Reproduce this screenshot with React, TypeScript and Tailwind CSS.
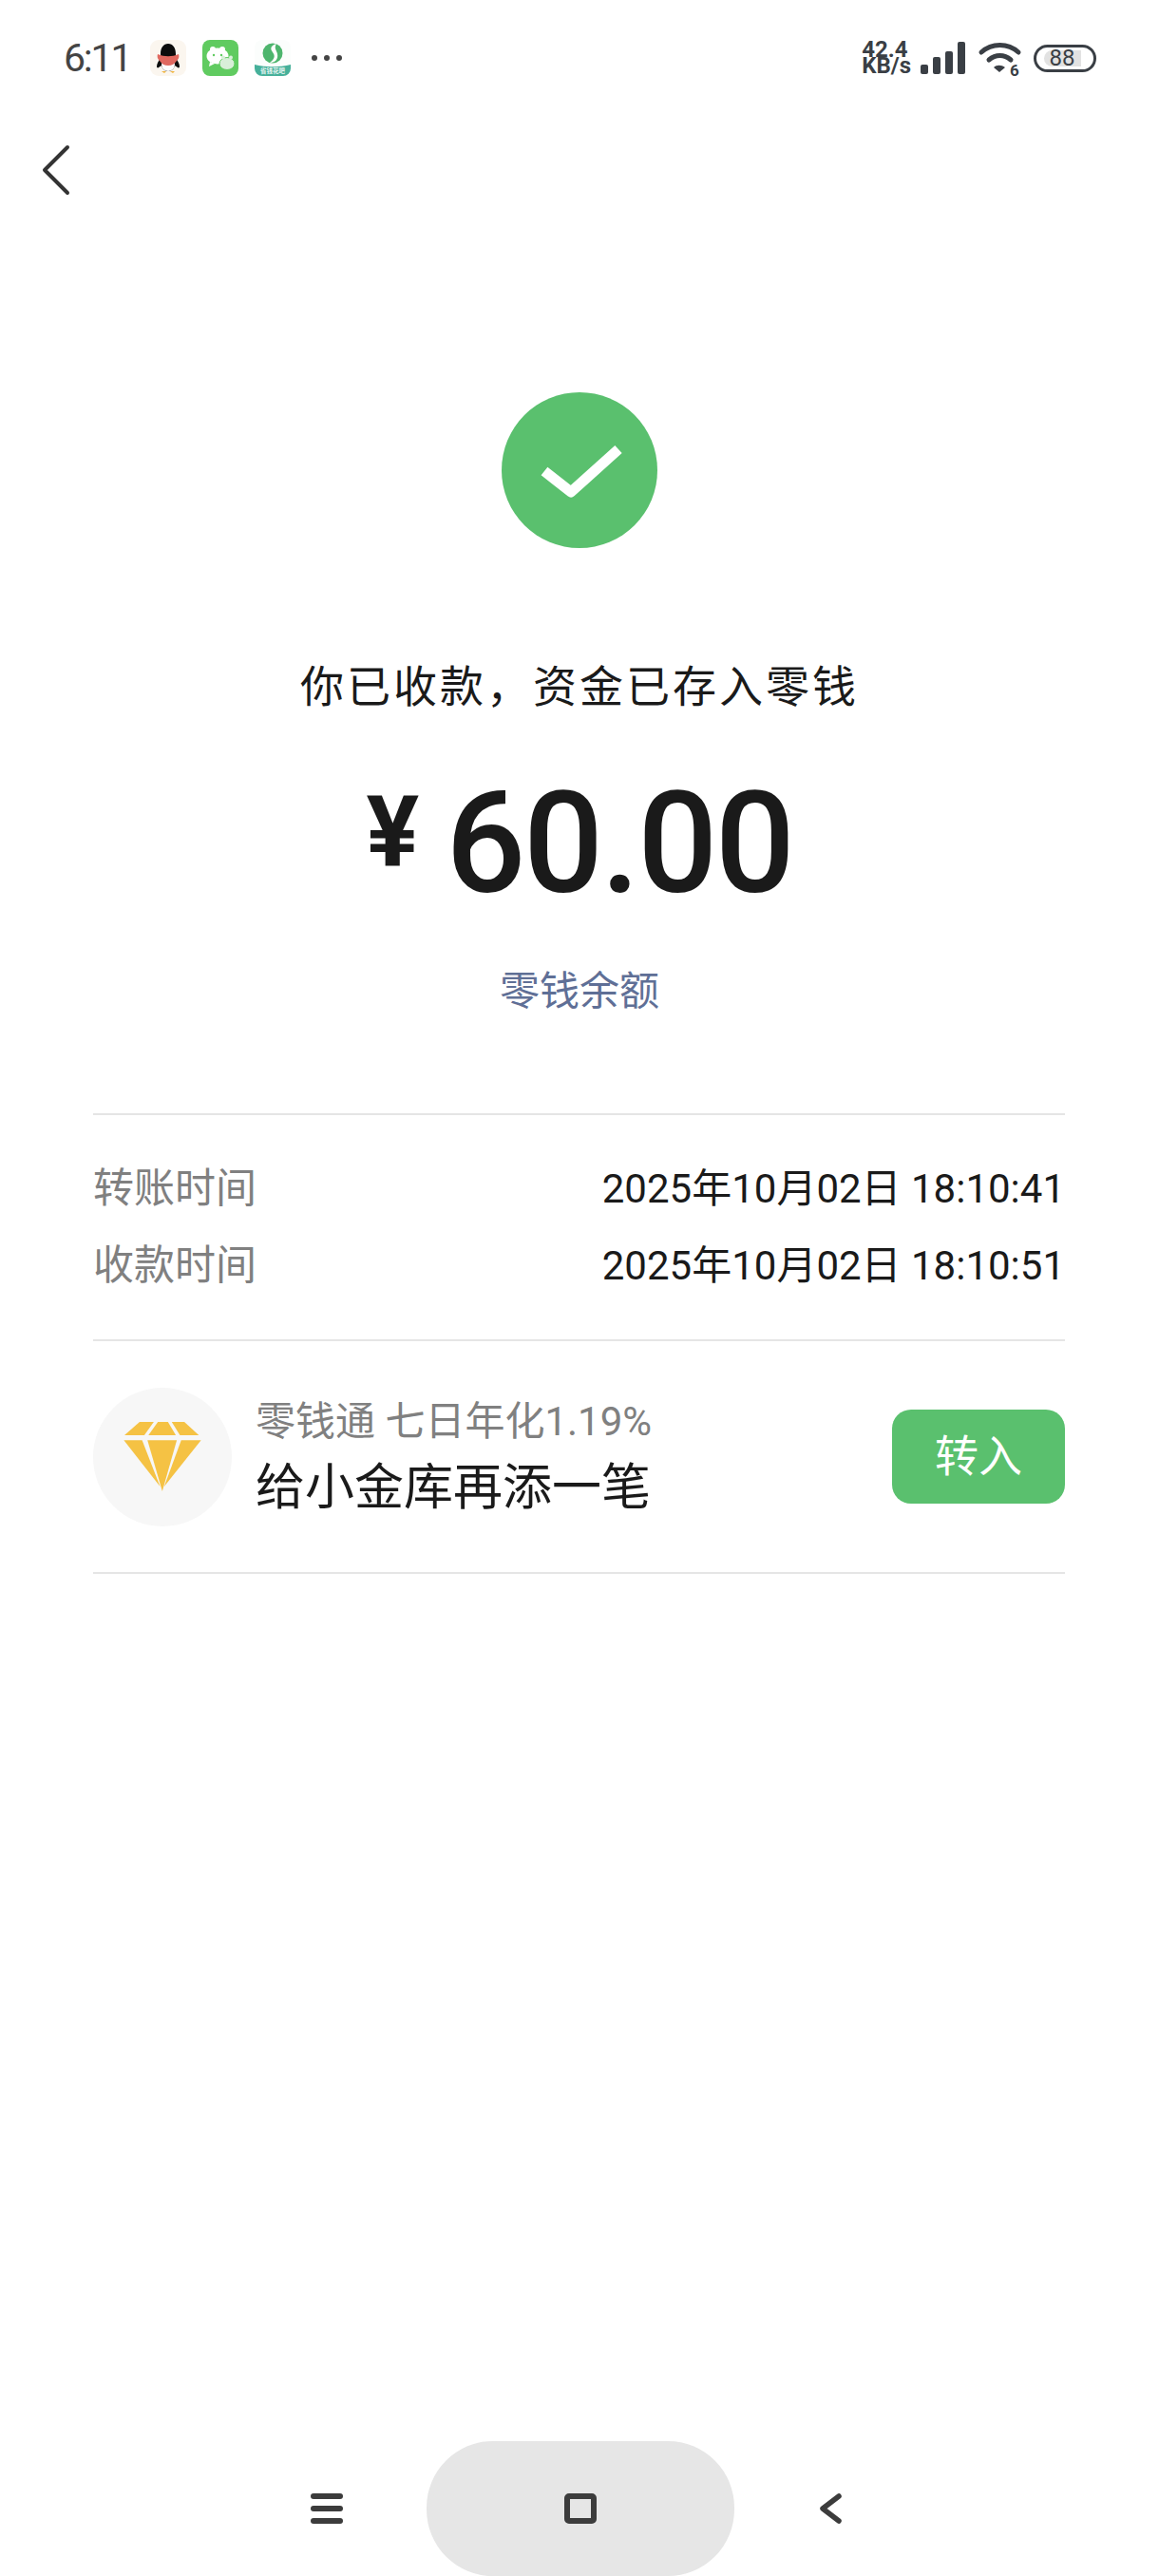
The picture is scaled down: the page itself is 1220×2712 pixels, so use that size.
import React from "react";

const cjk = "font-['Roboto','Noto_Sans_CJK_SC',sans-serif]";

const QQIcon = () => (
  <svg width="38" height="38" viewBox="0 0 38 38">
    <rect width="38" height="38" rx="9" fill="#fbf6ef" />
    <path d="M19 4c-5 0-8 4-8 11v4c-2 3-4 6-4 9 0 1 1 2 2 1l3-2c1 4 4 6 7 6s6-2 7-6l3 2c1 1 2 0 2-1 0-3-2-6-4-9v-4c0-7-3-11-8-11z" fill="#0c0c0c" />
    <ellipse cx="19" cy="26" rx="7" ry="7" fill="#fdfdfd" />
    <path d="M8 15c7 3 15 3 22 0 1 3 0 5-2 7-2 3-5 5-9 5s-7-2-9-5c-2-2-3-4-2-7z" fill="#e0685f" />
    <path d="M12 33h5l-2 2zM21 33h5l-2 2z" fill="#f0b33c" />
  </svg>
);

const WechatIcon = () => (
  <svg width="38" height="38" viewBox="0 0 38 38">
    <rect width="38" height="38" rx="8" fill="#60cb60" />
    <ellipse cx="16" cy="17" rx="11.5" ry="8.5" fill="#fff" />
    <circle cx="11" cy="10" r="3" fill="#fff" />
    <circle cx="21" cy="10" r="3" fill="#fff" />
    <path d="M8 23l-1 5 6-3z" fill="#fff" />
    <ellipse cx="26" cy="25" rx="8" ry="6.5" fill="#d8efd8" stroke="#60cb60" strokeWidth="1" />
    <circle cx="22" cy="18.5" r="2" fill="#d8efd8" />
    <circle cx="30" cy="18.5" r="2" fill="#d8efd8" />
    <circle cx="12" cy="16" r="1.2" fill="#60cb60" />
    <circle cx="20" cy="16" r="1.2" fill="#60cb60" />
  </svg>
);

const GreenAppIcon = () => (
  <svg width="38" height="38" viewBox="0 0 38 38">
    <rect width="38" height="38" rx="8" fill="#fbfdfc" />
    <path d="M0 26c12 3 26 3 38 0v4a8 8 0 0 1-8 8H8a8 8 0 0 1-8-8z" fill="#46b09a" />
    <circle cx="19" cy="14" r="10.5" fill="#4db56d" />
    <path d="M23 4c-6 2-7 5-4 9s2 7-3 11c6 0 9-4 8-9s-4-6-1-11z" fill="#fff" />
    <text x="19" y="35" textAnchor="middle" fontFamily="Noto Sans CJK SC" fontWeight="700" fontSize="6.5" fill="#e6f5f1">省钱花吧</text>
  </svg>
);

const StatusBar = () => (
  <div className="flex h-[122px] items-center justify-between pl-[67px] pr-[66px]">
    <div className="flex items-center">
      <span className="w-[91px] text-[41px] leading-none tracking-[-2.2px] text-[#444444]">6:11</span>
      <div className="flex items-center gap-[17px]">
        <QQIcon />
        <WechatIcon />
        <GreenAppIcon />
      </div>
      <div className="ml-[22px] flex gap-[7px]">
        <span className="h-[6px] w-[6px] rounded-full bg-[#444444]" />
        <span className="h-[6px] w-[6px] rounded-full bg-[#444444]" />
        <span className="h-[6px] w-[6px] rounded-full bg-[#444444]" />
      </div>
    </div>
    <div className="flex items-center">
      <div className="text-[24px] font-bold leading-[17px] text-[#3a3f45]">
        42.4
        <br />
        KB/s
      </div>
      <svg className="ml-[10px]" width="48" height="34" viewBox="0 0 48 34" fill="#3a3f45">
        <rect x="0" y="24" width="8" height="10" rx="2" />
        <rect x="13" y="16" width="8" height="18" rx="2" />
        <rect x="26" y="10" width="8" height="24" rx="2" />
        <rect x="39" y="0" width="8" height="34" rx="2" />
      </svg>
      <svg className="ml-[13px] mt-[3px] overflow-visible" width="46" height="38" viewBox="0 0 46 38">
        <path d="M3 11c11-10 28-10 39 0" fill="none" stroke="#3a3f45" strokeWidth="5" strokeLinecap="round" />
        <path d="M11 19c7-6 16-6 23 0" fill="none" stroke="#3a3f45" strokeWidth="5" strokeLinecap="round" />
        <path d="M16 27c3-3 8-3 12 0l-6 5z" fill="#3a3f45" />
        <text x="33" y="36" fontFamily="Roboto" fontWeight="700" fontSize="17" fill="#3a3f45">6</text>
      </svg>
      <div className="relative ml-[12px] flex h-[29px] w-[66px] items-center justify-center rounded-full border-[3px] border-[#3a3f45] text-[24px] leading-none text-[#3a3f45]">
        <span className="absolute left-[8px] top-[3px] h-[17px] w-[39px] rounded-l-full bg-[#e2e2e2]" />
        <span className="relative -ml-[6px]">88</span>
      </div>
    </div>
  </div>
);

const NavBar = () => (
  <div className="mt-auto flex items-center pl-[327px]">
    <svg width="34" height="32" viewBox="0 0 34 32" fill="#3c3c3c">
      <rect y="0" width="34" height="6" rx="3" />
      <rect y="13" width="34" height="6" rx="3" />
      <rect y="26" width="34" height="6" rx="3" />
    </svg>
    <div className="ml-[88px] mr-[89px] flex h-[142px] w-[324px] items-center justify-center rounded-[70px] bg-[#e6e6e6]">
      <div className="h-[32px] w-[34px] rounded-[5px] border-[6px] border-[#3c3c3c]" />
    </div>
    <svg width="24" height="32" viewBox="0 0 24 32" fill="none" stroke="#3c3c3c" strokeWidth="5.5" strokeLinecap="round" strokeLinejoin="round">
      <path d="M21 3L4 16l17 13" />
    </svg>
  </div>
);

const DetailRow = ({ label, value }: { label: string; value: string }) => (
  <div className="flex h-[81px] items-center justify-between">
    <span className="text-[43px] text-[#808080]">{label}</span>
    <span className="text-[42px] text-[#1a1a1a]">{value}</span>
  </div>
);

export default function App() {
  return (
    <div className={`${cjk} flex h-[2712px] w-[1220px] flex-col overflow-hidden bg-white`}>
      <StatusBar />
      <div className="pl-[44px] pt-[30px]">
        <svg width="30" height="54" viewBox="0 0 30 54" fill="none" stroke="#333333" strokeWidth="4" strokeLinecap="round" strokeLinejoin="round">
          <path d="M27 3L3 27l24 24" />
        </svg>
      </div>

      <div className="mt-[207px] flex flex-col items-center">
        <div className="h-[164px] w-[164px] rounded-full bg-[#5ac06e]">
          <svg width="164" height="164" viewBox="0 0 164 164" fill="none" stroke="#ffffff" strokeWidth="11" strokeLinejoin="round">
            <path d="M45 83l28 22 50-45" />
          </svg>
        </div>
        <h1 className="mt-[116px] text-[46px] font-normal leading-[60px] tracking-[3px] text-[#1a1a1a]">你已收款，资金已存入零钱</h1>
        <div className="mt-[56px] flex h-[160px] items-center font-medium text-[#1a1a1a]">
          <span className="mb-[26px] mr-[28px] text-[104px] font-bold leading-none">¥</span>
          <span className="text-[148px] leading-none tracking-[-2.5px]">60.00</span>
        </div>
        <div className="mt-[45px] text-[42px] leading-[60px] text-[#5f6f96]">零钱余额</div>
      </div>

      <div className="ml-[98px] mt-[98px] w-[1023px] flex-none border-t-2 border-[#e5e5e5] pb-[37px] pt-[37px]">
        <DetailRow label="转账时间" value="2025年10月02日 18:10:41" />
        <DetailRow label="收款时间" value="2025年10月02日 18:10:51" />
      </div>

      <div className="ml-[98px] flex h-[247px] w-[1023px] items-center justify-between border-y-2 border-[#e5e5e5]">
        <div className="flex items-center">
          <div className="flex h-[146px] w-[146px] items-center justify-center rounded-full bg-[#f7f7f7]">
            <svg width="82" height="73" viewBox="30 30 245 220" fill="#f5c244">
              <path d="M80 30h45L95 72H32z" />
              <path d="M138 30h32l25 42h-87z" />
              <path d="M182 30h40l46 42h-60z" />
              <path d="M30 88h58l57 147z" />
              <path d="M105 88h93l-46 162z" />
              <path d="M275 88h-63l-54 147z" />
            </svg>
          </div>
          <div className="ml-[25px] flex flex-col">
            <span className="text-[42px] leading-[60px] text-[#808080]">零钱通 七日年化1.19%</span>
            <span className="mt-[6px] text-[52px] leading-[68px] text-[#1a1a1a]">给小金库再添一笔</span>
          </div>
        </div>
        <button className="flex h-[99px] w-[182px] items-center justify-center rounded-[20px] bg-[#5ac06e] text-[46px] text-white">转入</button>
      </div>

      <NavBar />
    </div>
  );
}
